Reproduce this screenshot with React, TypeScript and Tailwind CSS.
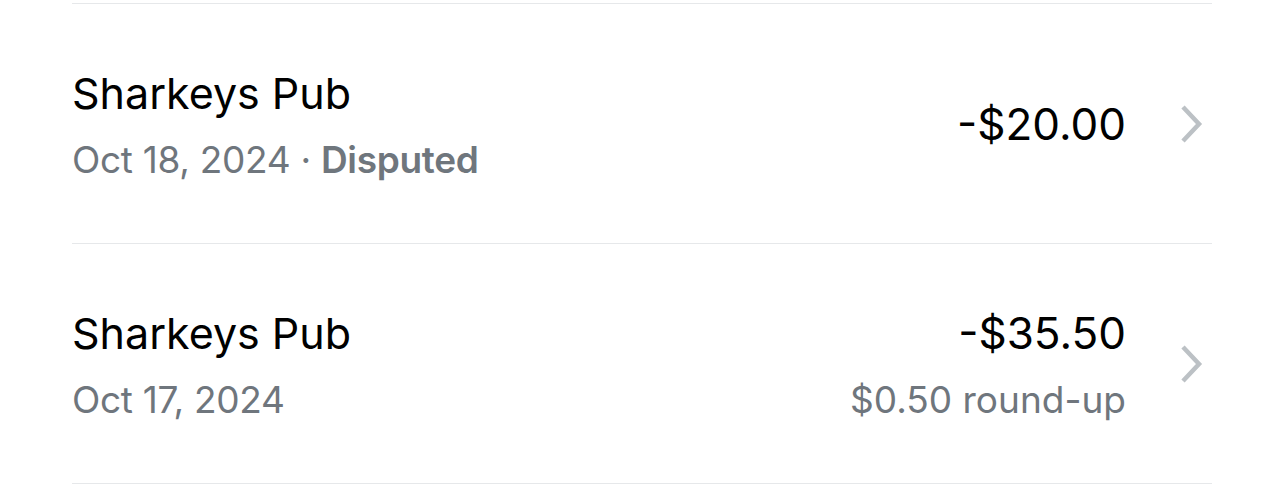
import React from 'react';

interface Txn {
  merchant: string;
  date: string;
  status?: string;
  amount: string;
  note?: string;
}

const txns: Txn[] = [
  { merchant: 'Sharkeys Pub', date: 'Oct 18, 2024', status: 'Disputed', amount: '-$20.00' },
  { merchant: 'Sharkeys Pub', date: 'Oct 17, 2024', amount: '-$35.50', note: '$0.50 round-up' }
];

const Chevron: React.FC = () => (
  <svg width="26" height="40" viewBox="0 0 26 40" fill="none" className="shrink-0">
    <path d="M5 3 L21 20 L5 37" stroke="#bcc1c5" strokeWidth="4.5" strokeLinejoin="miter" />
  </svg>
);

const App: React.FC = () => {
  return (
    <div className="w-[1284px] h-[504px] bg-white pt-[3px] px-[72px] font-['Inter','Liberation_Sans',sans-serif] overflow-hidden">
      <div className="border-t border-[#e6e8ea]">
        {txns.map((t, i) => (
          <div key={i} className="h-[240px] flex items-center border-b border-[#e6e8ea]">
            <div className="flex-1 flex flex-col pt-[4px]">
              <span className="text-[43px] leading-[48px] text-black">{t.merchant}</span>
              <span className="text-[37px] leading-[44px] mt-[21px] tracking-[-0.3px] text-[#6f767d]">
                {t.date}
                {t.status && (
                  <>
                    {' · '}
                    <span className="font-semibold">{t.status}</span>
                  </>
                )}
              </span>
            </div>
            <div className={t.note ? 'flex flex-col items-end pt-[4px]' : 'flex flex-col items-end'}>
              <span className="text-[44px] leading-[48px] text-black">{t.amount}</span>
              {t.note && (
                <span className="text-[37px] leading-[44px] mt-[21px] text-[#6f767d]">{t.note}</span>
              )}
            </div>
            <div className="ml-[52px] mr-[8px] flex items-center">
              <Chevron />
            </div>
          </div>
        ))}
      </div>
    </div>
  );
};

export default App;
